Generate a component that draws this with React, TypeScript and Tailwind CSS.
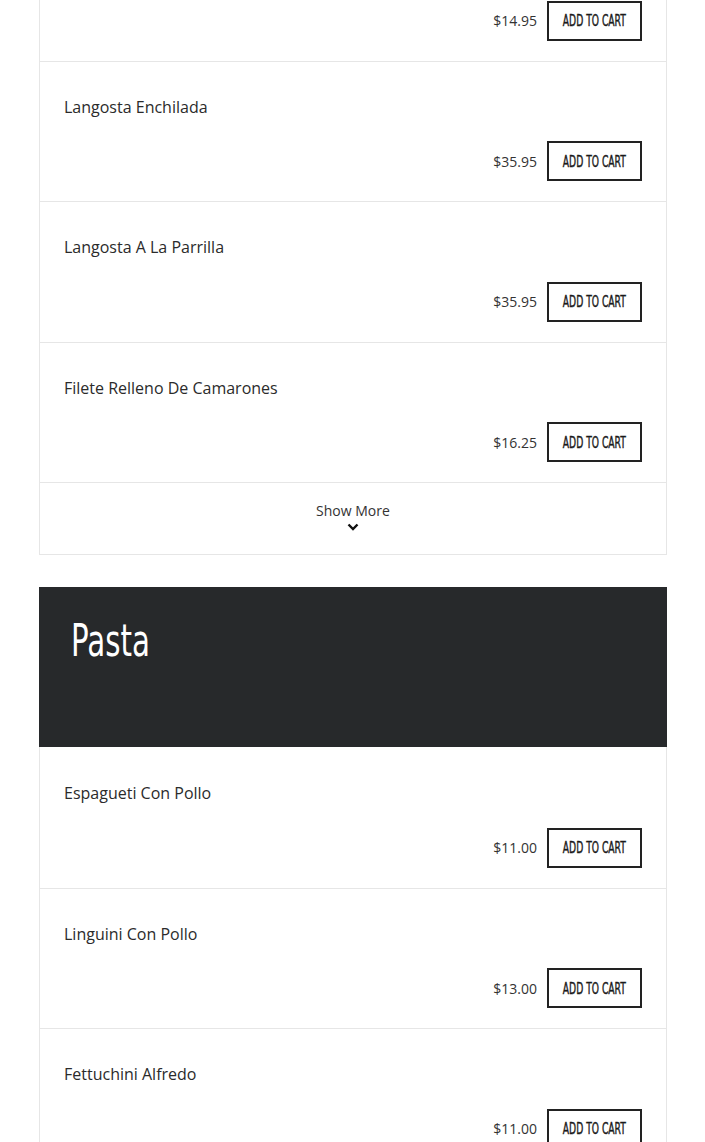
import React from "react";

const sans = "font-['Open_Sans','Liberation_Sans',sans-serif]";
const cond = "font-['DejaVu_Sans_Condensed','Liberation_Sans_Narrow','Roboto',sans-serif]";

function Item({ name, price, first }: { name: string; price: string; first?: boolean }) {
  return (
    <div className={`${first ? "border-t-transparent" : "border-[#e6e6e6]"} border-t px-[24px] pt-[33px] pb-[20px]`}>
      <div className={`${sans} h-[24px] text-[16px] leading-[24px] text-[#2b2b2b]`}>{name}</div>
      <div className="mt-[22.5px] flex items-center justify-end gap-[10px]">
        <span className={`${sans} text-[14px] text-[#333]`}>{price}</span>
        <button className="flex h-[40px] w-[95px] items-center justify-center border-2 border-[#222] bg-white pt-[2px]">
          <span className={`${cond} inline-block scale-x-[0.68] whitespace-nowrap text-[15px] font-normal uppercase text-[#1a1a1a] [-webkit-text-stroke:0.4px_#1a1a1a]`}>Add to cart</span>
        </button>
      </div>
    </div>
  );
}

export default function App() {
  return (
    <div className="min-h-[1142px] w-full overflow-hidden bg-white">
      <div className="ml-[39px] w-[628px] -mt-[80px]">
        <div className="border-x border-b border-[#e6e6e6]">
          <Item name="" price="$14.95" first />
          <Item name="Langosta Enchilada" price="$35.95" />
          <Item name="Langosta A La Parrilla" price="$35.95" />
          <Item name="Filete Relleno De Camarones" price="$16.25" />
          <div className="flex h-[72px] flex-col items-center border-t border-[#e6e6e6] pt-[18px]">
            <span className={`${sans} text-[14px] leading-[20px] text-[#333]`}>Show More</span>
            <svg width="12" height="8" viewBox="0 0 12 8" className="mt-[2px]">
              <path d="M1.5 1.5 L6 6 L10.5 1.5" fill="none" stroke="#111" strokeWidth="2.4" />
            </svg>
          </div>
        </div>
        <div className="mt-[32px] h-[160px] bg-[#27292b] px-[32px] pt-[24px]">
          <h2 className={`${cond} inline-block origin-left scale-x-[0.74] text-[44px] leading-[60px] font-normal text-white`}>Pasta</h2>
        </div>
        <div className="border-x border-[#e6e6e6]">
          <Item name="Espagueti Con Pollo" price="$11.00" first />
          <Item name="Linguini Con Pollo" price="$13.00" />
          <Item name="Fettuchini Alfredo" price="$11.00" />
        </div>
      </div>
    </div>
  );
}
